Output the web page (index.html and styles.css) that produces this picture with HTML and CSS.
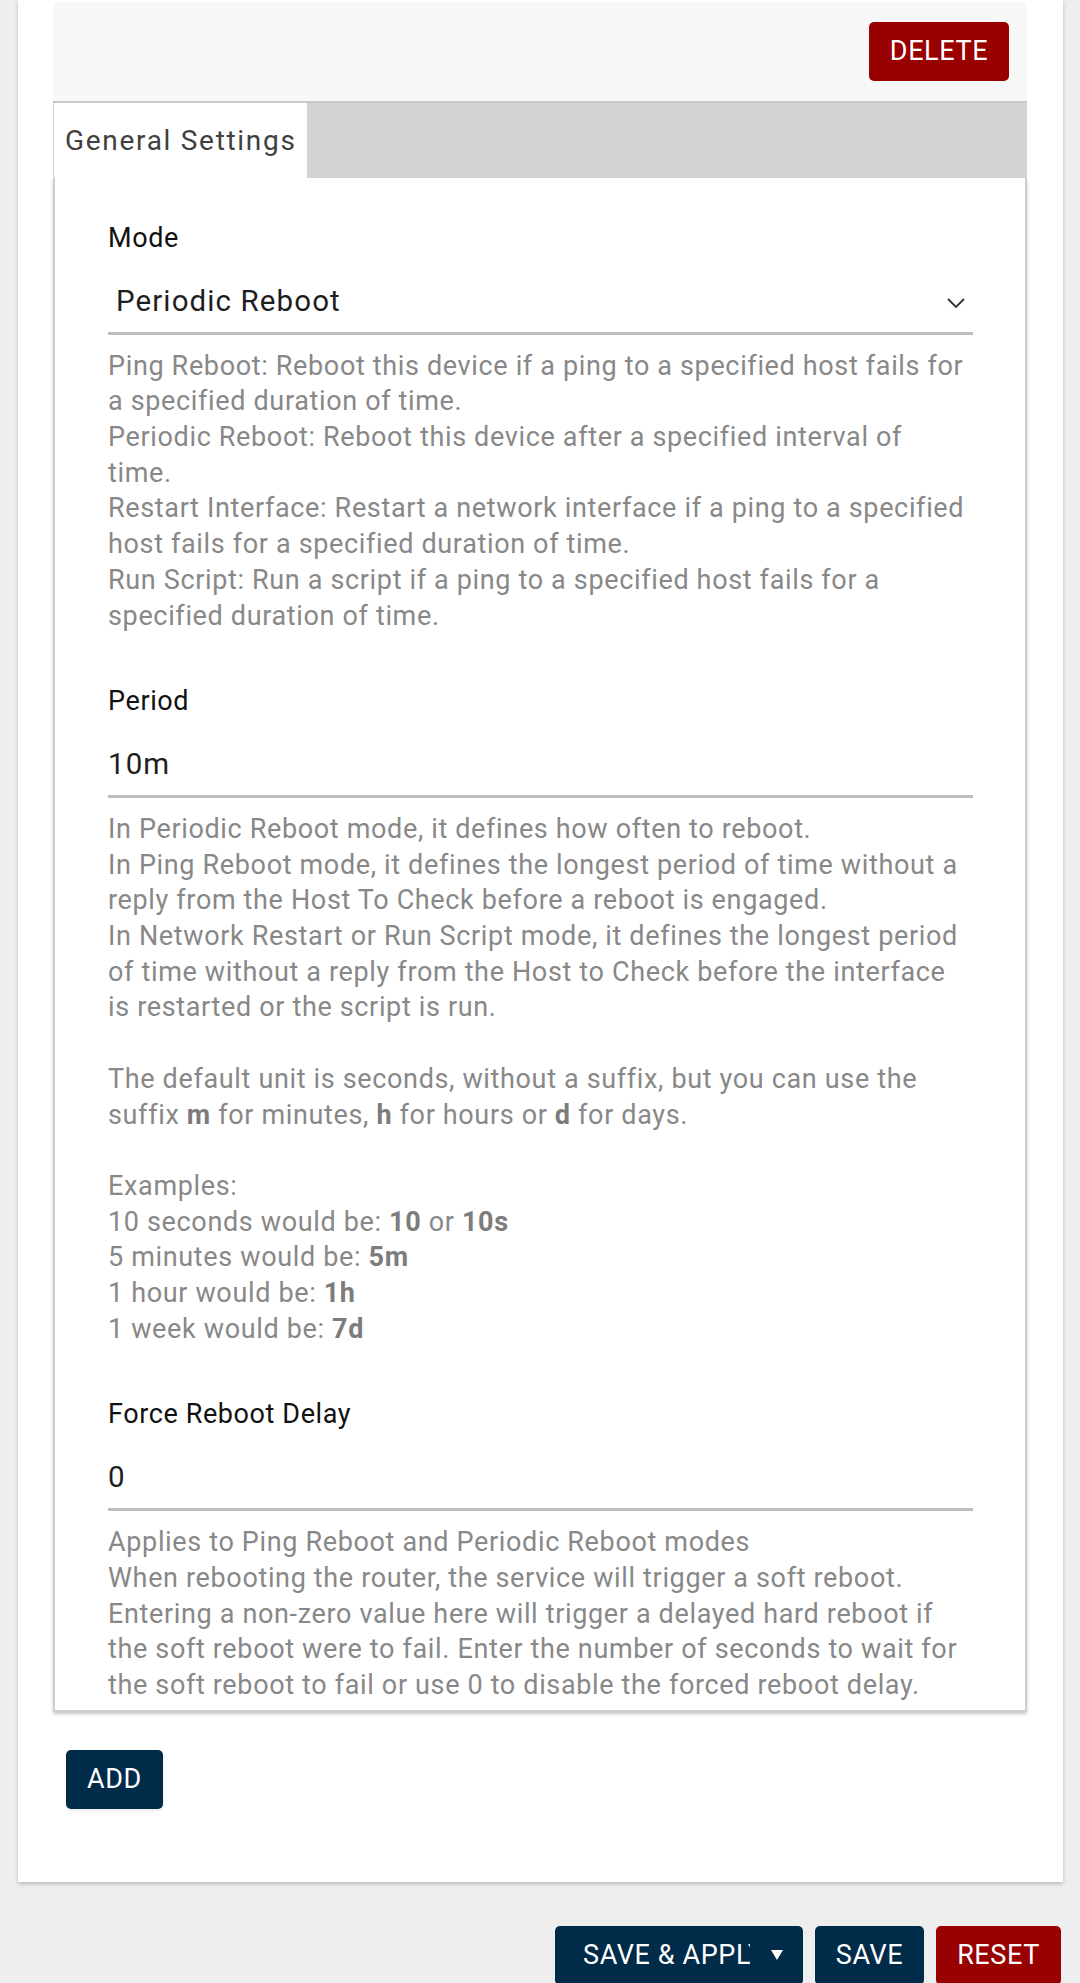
FILE: index.html
```html
<!DOCTYPE html>
<html lang="en">
<head>
<meta charset="utf-8">
<title>Watchcat</title>
<link rel="stylesheet" href="styles.css">
</head>
<body>
<div class="page">
  <div class="card">
    <div class="node-head">
      <button class="btn btn-red btn-delete">Delete</button>
    </div>
    <div class="tabs">
      <div class="tab">General Settings</div>
    </div>
    <div class="panel">
      <div class="field">
        <div class="label">Mode</div>
        <div class="input select">
          <span class="select-text">Periodic Reboot</span>
          <svg class="chevron" width="18" height="10" viewBox="0 0 18 10"><polyline points="1,1 9,9 17,1" fill="none" stroke="#333" stroke-width="1.8"/></svg>
        </div>
        <div class="desc">Ping Reboot: Reboot this device if a ping to a specified host fails for a specified duration of time.<br>Periodic Reboot: Reboot this device after a specified interval of time.<br>Restart Interface: Restart a network interface if a ping to a specified host fails for a specified duration of time.<br>Run Script: Run a script if a ping to a specified host fails for a specified duration of time.</div>
      </div>
      <div class="field">
        <div class="label">Period</div>
        <div class="input">10m</div>
        <div class="desc">In Periodic Reboot mode, it defines how often to reboot.<br>In Ping Reboot mode, it defines the longest period of time without a reply from the Host To Check before a reboot is engaged.<br>In Network Restart or Run Script mode, it defines the longest period of time without a reply from the Host to Check before the interface is restarted or the script is run.<br><br>The default unit is seconds, without a suffix, but you can use the suffix <b>m</b> for minutes, <b>h</b> for hours or <b>d</b> for days.<br><br>Examples:<br>10 seconds would be: <b>10</b> or <b>10s</b><br>5 minutes would be: <b>5m</b><br>1 hour would be: <b>1h</b><br>1 week would be: <b>7d</b></div>
      </div>
      <div class="field">
        <div class="label">Force Reboot Delay</div>
        <div class="input">0</div>
        <div class="desc">Applies to Ping Reboot and Periodic Reboot modes<br>When rebooting the router, the service will trigger a soft reboot. Entering a non-zero value here will trigger a delayed hard reboot if the soft reboot were to fail. Enter the number of seconds to wait for the soft reboot to fail or use 0 to disable the forced reboot delay.</div>
      </div>
    </div>
    <div class="add-row">
      <button class="btn btn-navy btn-add">Add</button>
    </div>
  </div>
  <div class="actions">
    <button class="btn btn-navy btn-apply"><span class="apply-text">Save &amp; Apply</span><svg class="caret" width="12" height="10" viewBox="0 0 12 10"><polygon points="0,0 12,0 6,10" fill="#fff"/></svg></button>
    <button class="btn btn-navy btn-save">Save</button>
    <button class="btn btn-red btn-reset">Reset</button>
  </div>
</div>
</body>
</html>
```
FILE: styles.css
```css
* {
  box-sizing: border-box;
  margin: 0;
  padding: 0;
}

body {
  background: #eeeeee;
  font-family: Roboto, "Noto Sans", sans-serif;
  width: 1080px;
  height: 1983px;
  overflow: hidden;
}

.page {
  padding: 0 17px 0 18px;
}

.card {
  background: #ffffff;
  padding: 2px 36px 0 35px;
  height: 1882px;
  box-shadow: 0 2px 4px rgba(0, 0, 0, 0.22);
}

.node-head {
  background: #f8f8f8;
  height: 99px;
  display: flex;
  justify-content: flex-end;
  align-items: flex-start;
  padding: 20px 18px 0 0;
}

.btn {
  height: 59px;
  line-height: 59px;
  padding: 0;
  border: none;
  border-radius: 5px;
  color: #ffffff;
  font-family: inherit;
  font-size: 27px;
  letter-spacing: 0.6px;
  text-transform: uppercase;
  text-align: center;
  white-space: nowrap;
}

.btn-red {
  background: #990000;
}

.btn-navy {
  background: #002b49;
}

.btn-delete {
  width: 140px;
}

.btn-add {
  width: 97px;
}

.btn-save {
  width: 109px;
}

.btn-reset {
  width: 125px;
}

.tabs {
  background: #d3d3d3;
  height: 77px;
  border-top: 2px solid #c9c9c9;
  padding-left: 1px;
  display: flex;
}

.tab {
  background: #ffffff;
  width: 253px;
  height: 75px;
  line-height: 75px;
  padding-left: 11px;
  font-size: 28px;
  letter-spacing: 1.7px;
  color: #404040;
}

.panel {
  border: 2px solid #cfcfcf;
  border-top: none;
  padding: 43.6px 52px 6px 53px;
  box-shadow: 0 2px 3px rgba(0, 0, 0, 0.22);
}

.field + .field {
  margin-top: 50.7px;
}

.label {
  font-size: 27px;
  line-height: 32px;
  letter-spacing: 0.6px;
  color: #111111;
}

.input {
  margin-top: 27px;
  font-size: 29.5px;
  line-height: 40px;
  letter-spacing: 1.1px;
  color: #1e1e1e;
  height: 54px;
  padding-bottom: 11px;
  border-bottom: 3px solid #bdbdbd;
}

.select {
  display: flex;
  justify-content: space-between;
  align-items: center;
}

.select-text {
  padding-left: 8px;
}

.chevron {
  margin-right: 8px;
  margin-top: 4px;
}

.desc {
  margin-top: 14px;
  margin-right: 4px;
  font-size: 27px;
  line-height: 35.7px;
  letter-spacing: 0.65px;
  color: #888888;
}

.desc b {
  font-weight: 700;
  color: #7c7c7c;
}

.add-row {
  padding: 38px 0 0 13px;
}

.add-row .btn {
  box-shadow: 0 2px 3px rgba(0, 0, 0, 0.08);
}

.actions {
  display: flex;
  justify-content: flex-end;
  gap: 12px;
  margin-top: 43.7px;
  padding-right: 2px;
}

.btn-apply {
  width: 248px;
  padding: 0 20px 0 28px;
  display: flex;
  align-items: center;
  justify-content: space-between;
  text-align: left;
}

.apply-text {
  display: block;
  width: 167px;
  overflow: hidden;
  white-space: nowrap;
}

.caret {
  flex: none;
}
```
